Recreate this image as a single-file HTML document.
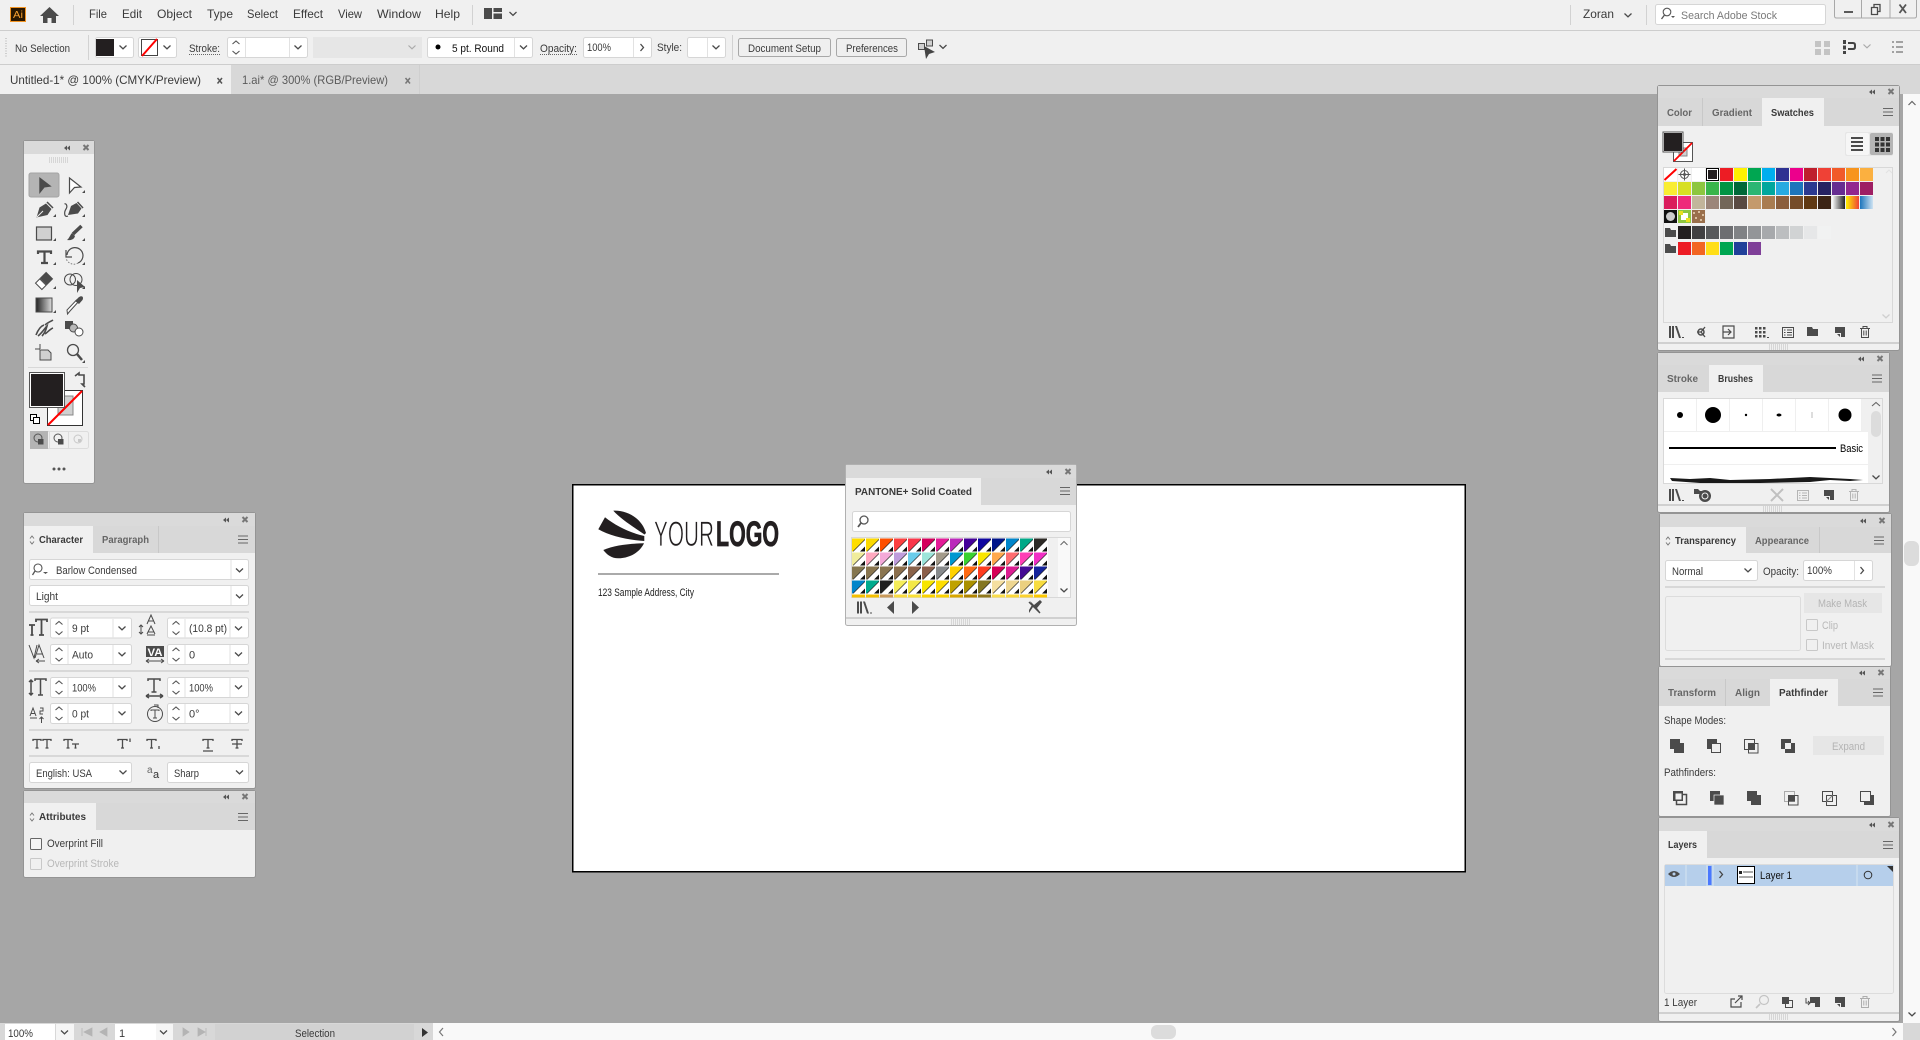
<!DOCTYPE html>
<html><head><meta charset="utf-8"><title>Illustrator</title>
<style>
html,body{margin:0;padding:0;width:1920px;height:1040px;overflow:hidden;background:#a6a6a6}
svg{display:block;position:absolute;left:0;top:0}
text{font-family:"Liberation Sans",sans-serif;font-size:11px;fill:#3a3a3a}
.f{fill:#fff;stroke:#d6d6d6;stroke-width:1}
.t{fill:#d8d8d8}
.b{fill:#f0f0f0}
.g{fill:#b4b4b4}
.s rect{width:13px;height:13px}
.ln{stroke:#d8d8d8;stroke-width:2}
.ic{fill:#4b4b4b}
.o{fill:none;stroke:#4b4b4b;stroke-width:1.2}
.m{font-size:12px}
</style></head><body>
<svg width="1920" height="1040" viewBox="0 0 1920 1040" xmlns="http://www.w3.org/2000/svg">
<defs>
<path id="ch" d="M-3.5-1.5 0 1.8 3.5-1.5" fill="none" stroke="#4a4a4a" stroke-width="1.3"/>
<path id="chg" d="M-3.5-1.5 0 1.8 3.5-1.5" fill="none" stroke="#aaa" stroke-width="1.2"/>
<g id="sp"><path d="M-3.5 -3.5 0-6.5 3.5-3.5M-3.5 3.5 0 6.5 3.5 3.5" fill="none" stroke="#555" stroke-width="1.1"/></g>
<g id="ud"><path d="M-2-1.5 0-4 2-1.5M-2 1.5 0 4 2 1.5" fill="none" stroke="#777" stroke-width="1"/></g>
<g id="hb"><path d="M-1 0 2-2.5V2.5ZM-4 0-1-2.5V2.5Z" fill="#555"/><path d="M15.5-3 20.5 2M20.5-3 15.5 2" stroke="#777" stroke-width="2" fill="none"/></g>
<g id="mn"><path d="M0-3.5H10M0 0H10M0 3.5H10" stroke="#666" stroke-width="1" fill="none"/></g>
<g id="lib" fill="#4b4b4b"><rect x="0" y="-6" width="2" height="12"/><rect x="3" y="-6" width="2" height="12"/><path d="M6-6 8-6 12 6 10 6Z"/><rect x="13" y="5" width="2" height="1"/></g>
<g id="nw"><path d="M0-5H10V5H6V1H0Z" fill="#4b4b4b"/><path d="M2 2H5V5Z" fill="#4b4b4b"/></g>
<g id="tr" fill="none" stroke="#4b4b4b" stroke-width="1"><path d="M0-3.5H10M3-3.5V-5.5H7V-3.5M1.5-3.5V5.5H8.500V-3.500M3.800-1.500V3.500M6.200-1.500V3.500"/></g>
<g id="fd"><path d="M0-5H5L6-3H11V4H0Z" fill="#4b4b4b"/></g>
<g id="lst" fill="none" stroke="#4b4b4b"><rect x="0.500" y="-4.500" width="11" height="10"/><path d="M2-2H3.500M5-2H10M2 0.500H3.500M5 0.500H10M2 3H3.500M5 3H10"/></g>
<pattern id="pn" x="852" y="538.5" width="14" height="14" patternUnits="userSpaceOnUse"><path d="M13 1V13H1Z" fill="#fff"/><path d="M13 1 1 13" stroke="#222" stroke-width=".6"/><path d="M13 8V13H8Z" fill="#111"/><path d="M13 0h1v14H13zM0 13h14v1H0z" fill="#fff"/></pattern>
<linearGradient id="gr"><stop offset="0" stop-color="#222"/><stop offset="1" stop-color="#ddd"/></linearGradient>
<linearGradient id="sg1"><stop offset="0" stop-color="#fff"/><stop offset="1" stop-color="#222"/></linearGradient>
<linearGradient id="sg2"><stop offset="0" stop-color="#fff200"/><stop offset="1" stop-color="#ef4136"/></linearGradient>
<linearGradient id="sg3"><stop offset="0" stop-color="#1c75bc"/><stop offset="1" stop-color="#cfe3f2"/></linearGradient>
</defs>

<!-- frame -->
<rect width="1920" height="1040" fill="#a6a6a6"/>
<rect width="1920" height="30" fill="#f0f0f0"/>
<rect y="30" width="1920" height="1" fill="#cdcdcd"/>
<rect y="31" width="1920" height="33" fill="#f0f0f0"/>
<rect y="64" width="1920" height="1" fill="#cdcdcd"/>
<rect y="65" width="1920" height="29" fill="#d8d8d8"/>
<rect y="65" width="231" height="29" fill="#f0f0f0"/>
<rect x="419" y="65" width="1" height="29" fill="#cfcfcf"/>

<!-- menu bar -->
<rect x="10.500" y="7.500" width="15" height="14" fill="#2b1700" stroke="#f29423"/>
<text x="13" y="18" textLength="10" lengthAdjust="spacingAndGlyphs" style="fill:#f7a030;font-size:10px">Ai</text>
<path d="M49.500 7 40 16H43V23H47.500V18H51.500V23H56V16H59Z" fill="#4b4b4b"/>
<rect x="73" y="5" width="1" height="20" fill="#d2d2d2"/>
<text class="m" x="89" y="18" textLength="18" lengthAdjust="spacingAndGlyphs">File</text>
<text class="m" x="122" y="18" textLength="20" lengthAdjust="spacingAndGlyphs">Edit</text>
<text class="m" x="157" y="18" textLength="35" lengthAdjust="spacingAndGlyphs">Object</text>
<text class="m" x="207" y="18" textLength="26" lengthAdjust="spacingAndGlyphs">Type</text>
<text class="m" x="247" y="18" textLength="31" lengthAdjust="spacingAndGlyphs">Select</text>
<text class="m" x="293" y="18" textLength="30" lengthAdjust="spacingAndGlyphs">Effect</text>
<text class="m" x="338" y="18" textLength="24" lengthAdjust="spacingAndGlyphs">View</text>
<text class="m" x="377" y="18" textLength="44" lengthAdjust="spacingAndGlyphs">Window</text>
<text class="m" x="435" y="18" textLength="25" lengthAdjust="spacingAndGlyphs">Help</text>
<rect x="472" y="5" width="1" height="20" fill="#d2d2d2"/>
<path d="M484 8h8v11h-8zM493.500 8H502V12H493.500zM493.500 13.500H502V19H493.500z" fill="#4b4b4b"/>
<use href="#ch" x="513" y="13.500"/>
<rect x="1570" y="5" width="1" height="20" fill="#d2d2d2"/>
<text class="m" x="1583" y="18" textLength="31" lengthAdjust="spacingAndGlyphs">Zoran</text>
<use href="#ch" x="1628" y="15"/>
<rect x="1646" y="5" width="1" height="20" fill="#d2d2d2"/>
<rect x="1655.500" y="4.500" width="170" height="20" rx="2" class="f"/>
<circle cx="1667" cy="12" r="3.800" fill="none" stroke="#555" stroke-width="1.100"/><path d="M1664.500 15 1661.500 19" stroke="#555" stroke-width="1.300"/><path d="M1671 16h4l-2 2z" fill="#555"/>
<text x="1681" y="19" textLength="96" lengthAdjust="spacingAndGlyphs" style="fill:#7a7a7a">Search Adobe Stock</text>
<path d="M1834.500 0V16Q1834.500 18 1836.500 18H1914.500Q1916.500 18 1916.500 16V0M1861.500 0V18M1890 0V18" fill="none" stroke="#a8a8a8"/>
<rect x="1844" y="11" width="9" height="2" fill="#5a5a5a"/>
<path d="M1871.500 7.500h6v7h-6zM1874 7.500v-3h6v7h-2.500" fill="none" stroke="#4b4b4b" stroke-width="1.300"/>
<path d="M1899.500 4.500 1906 13M1906 4.500 1899.500 13" stroke="#555" stroke-width="1.800"/>

<!-- control bar -->
<path d="M6 38V58" stroke="#aaa" stroke-dasharray="1 1.500" stroke-width="1"/>
<text x="15" y="52" textLength="55" lengthAdjust="spacingAndGlyphs">No Selection</text>
<rect x="88" y="35" width="1" height="25" fill="#d2d2d2"/>
<rect x="95.500" y="37.500" width="38" height="20" rx="2" class="f"/><rect x="96" y="39" width="18" height="17" fill="#231f20"/><use href="#ch" x="123" y="47"/>
<rect x="138.500" y="37.500" width="38" height="20" rx="2" class="f"/><rect x="141.500" y="39.500" width="16" height="16" fill="#fff" stroke="#444"/><path d="M142 56 157 39" stroke="#f00" stroke-width="2"/><use href="#ch" x="167" y="47"/>
<text x="189" y="52" textLength="31" lengthAdjust="spacingAndGlyphs">Stroke:</text><path d="M189 54.500H220" stroke="#666" stroke-dasharray="1 1"/>
<rect x="227.500" y="37.500" width="80" height="20" rx="2" class="f"/><path d="M245.500 38V57M289.500 38V57" stroke="#e2e2e2"/><use href="#sp" x="236" y="47.500"/><use href="#ch" x="298" y="47"/>
<rect x="313" y="37" width="109" height="21" fill="#e6e6e6"/><use href="#chg" x="412" y="47"/>
<rect x="427.500" y="37.500" width="105" height="20" rx="2" class="f"/><path d="M514.500 38V57" stroke="#e2e2e2"/><circle cx="438" cy="47" r="2.500" fill="#000"/><text x="452" y="52" textLength="52" lengthAdjust="spacingAndGlyphs" style="fill:#111">5 pt. Round</text><use href="#ch" x="523.500" y="47"/>
<text x="540" y="52" textLength="37" lengthAdjust="spacingAndGlyphs">Opacity:</text><path d="M540 54.500H577" stroke="#666" stroke-dasharray="1 1"/>
<rect x="583.500" y="37.500" width="68" height="20" rx="2" class="f"/><path d="M633.500 38V57" stroke="#e2e2e2"/><text x="587" y="51" textLength="24" lengthAdjust="spacingAndGlyphs">100%</text><path d="M640.500 44 643.500 47.500 640.500 51" fill="none" stroke="#4a4a4a" stroke-width="1.300"/>
<text x="657" y="51" textLength="25" lengthAdjust="spacingAndGlyphs">Style:</text>
<rect x="687.500" y="37.500" width="38" height="20" rx="2" class="f"/><path d="M707.500 38V57" stroke="#e2e2e2"/><use href="#ch" x="716" y="47"/>
<rect x="732" y="35" width="1" height="25" fill="#d2d2d2"/>
<rect x="738.500" y="38.500" width="92" height="18" rx="2" fill="#efefef" stroke="#a8a8a8"/><text x="748" y="52" textLength="73" lengthAdjust="spacingAndGlyphs">Document Setup</text>
<rect x="836.500" y="38.500" width="70" height="18" rx="2" fill="#efefef" stroke="#a8a8a8"/><text x="846" y="52" textLength="52" lengthAdjust="spacingAndGlyphs">Preferences</text>
<g fill="#cfcfcf" stroke="#4b4b4b"><rect x="918.500" y="43.500" width="6" height="6"/><rect x="926.500" y="40" width="6" height="6"/></g><path d="M924 46 935 52 929 54 926 59Z" fill="#444"/><use href="#ch" x="943" y="46.500"/>
<path d="M1815 41h6v6h-6zM1824 41h6v6h-6zM1815 49h6v6h-6zM1824 49h6v6h-6z" fill="#c4c4c4"/>
<path d="M1843 40h3v4h-3zM1843 45.500h3v4h-3zM1843 51h3v3h-3zM1848 42h5q3 0 3 3v2q0 3-3 3h-5v-2h5q1 0 1-1v-2q0-1-1-1h-5z" fill="#444"/>
<use href="#chg" x="1867" y="46"/>
<path d="M1892 42h2M1896 42h7M1892 47h2M1896 47h7M1892 52h2M1896 52h7" stroke="#555" fill="none"/>

<!-- tabs -->
<text class="m" x="10" y="84" textLength="191" lengthAdjust="spacingAndGlyphs">Untitled-1* @ 100% (CMYK/Preview)</text>
<path d="M217.500 78 222 83.500M222 78 217.500 83.500" stroke="#555" stroke-width="1.500"/>
<text class="m" x="242" y="84" textLength="146" lengthAdjust="spacingAndGlyphs" style="fill:#5a5a5a">1.ai* @ 300% (RGB/Preview)</text>
<path d="M405.500 78 410 83.500M410 78 405.500 83.500" stroke="#777" stroke-width="1.500"/>

<!-- artboard -->
<rect x="572.750" y="484.750" width="892.500" height="387" fill="#fff" stroke="#000" stroke-width="1.500"/>
<path d="M613.300 510.700C628 510 642 519 646 533L644.500 534.500C632 526 621 519 613.300 510.700Z" fill="#231f20"/>
<path d="M605 517.300 598.300 529.300C610 536 628 540 644.300 541V536C630 533 616 526 605 517.300Z" fill="#231f20"/>
<path d="M603.300 550C615 545 630 543.500 644 543.300C640 552 630 558.300 618 558.300 612 558.300 607 555 603.300 550Z" fill="#231f20"/>
<text x="654" y="546" textLength="60" lengthAdjust="spacingAndGlyphs" style="font-size:35px;fill:#231f20;stroke:#fff;stroke-width:.7">YOUR</text>
<text x="716" y="546" textLength="63" lengthAdjust="spacingAndGlyphs" style="font-size:35px;font-weight:bold;fill:#231f20;stroke:#231f20;stroke-width:.8">LOGO</text>
<rect x="598" y="573.500" width="181" height="1" fill="#555"/>
<text x="598" y="596" textLength="96" lengthAdjust="spacingAndGlyphs" style="font-size:11px;fill:#222">123 Sample Address, City</text>

<!-- right scrollbar -->
<rect x="1903" y="94" width="17" height="929" fill="#f9f9f9"/>
<rect x="1904" y="541" width="15" height="25" rx="6" fill="#dcdcdc"/>
<path d="M1908.500 105 1912 101.500 1915.500 105" fill="none" stroke="#666" stroke-width="1.200"/>
<use href="#ch" x="1912" y="1014"/>

<!-- status bar -->
<rect y="1023" width="1920" height="17" fill="#d8d8d8"/>
<rect x="5" y="1024" width="50" height="16" fill="#fff"/>
<text x="8" y="1037" textLength="25" lengthAdjust="spacingAndGlyphs" style="font-size:11px">100%</text>
<rect x="56" y="1024" width="18" height="16" fill="#f5f5f5"/><use href="#ch" x="64.500" y="1032"/>
<path d="M82 1028v8M92 1028l-8 4 8 4zM107 1028l-7 4 7 4z" fill="#b4b4b4" stroke="#b4b4b4" stroke-width=".8"/>
<rect x="115" y="1024" width="41" height="16" fill="#fff"/><text x="119" y="1037" style="font-size:11px">1</text>
<rect x="156" y="1024" width="17" height="16" fill="#f5f5f5"/><use href="#ch" x="163.500" y="1032"/>
<path d="M183 1028l6 4-6 4zM198 1028l7 4-7 4zM206 1028v8" fill="#b4b4b4" stroke="#b4b4b4" stroke-width=".8"/>
<rect x="215" y="1024" width="199" height="16" fill="#d2d2d2"/>
<text x="295" y="1037" textLength="40" lengthAdjust="spacingAndGlyphs">Selection</text>
<path d="M422 1028v9l6-4.500z" fill="#333"/>
<rect x="433" y="1023" width="1470" height="17" fill="#f9f9f9"/>
<path d="M443 1028 439.500 1032 443 1036" fill="none" stroke="#777" stroke-width="1.200"/>
<rect x="1151" y="1025" width="25" height="14" rx="6" fill="#dcdcdc"/>
<path d="M1892.500 1028 1896 1032 1892.500 1036" fill="none" stroke="#777" stroke-width="1.200"/>

<!-- TOOLS -->
<rect x="23.500" y="140.500" width="71" height="343" rx="2" fill="#f0f0f0" stroke="#949494"/>
<rect x="24" y="141" width="70" height="13" fill="#dadada"/>
<use href="#hb" x="68" y="148"/>
<path d="M49 158h19M49 160h19M49 162h19" stroke="#bbb" stroke-dasharray="1 1" fill="none"/>
<rect x="29" y="173" width="30" height="24" rx="2" fill="#b4b4b4" stroke="#a4a4a4"/>
<path class="ic" d="M39.300 177 51.700 186.500 44.500 187.500 39.300 194Z"/>
<path d="M69.500 178 81 187 74.500 187.500 69.500 193Z" fill="#fff" stroke="#4b4b4b" stroke-width="1.200"/>
<path class="ic" d="M36.500 217.500 39.500 207.500 46 203.500 51.500 209 47.500 215Z"/><path d="M47 202 53 208" stroke="#4b4b4b" stroke-width="1.500"/><path d="M37 217 43 211" stroke="#f0f0f0"/>
<path class="ic" d="M68 215 71 206 76.500 203 81.500 208.500 78 213.500Z"/><path d="M77.500 202 83 208" stroke="#4b4b4b" stroke-width="1.500"/><path d="M68 216C64 218 64 212 66 209 68 206 66 203 64.500 204" fill="none" stroke="#4b4b4b" stroke-width="1.200"/>
<rect x="36.500" y="227" width="15" height="13" fill="#d0d0d0" stroke="#4b4b4b" stroke-width="1.200"/>
<path d="M81.500 226 73 234" stroke="#4b4b4b" stroke-width="3.500"/><path class="ic" d="M72 233 75 236C74 240 70 240.500 67 240 69.500 238 70 235 72 233Z"/>
<path d="M38 254V251.500H51V254M44.500 251.500V263M41 263H48" fill="none" stroke="#4b4b4b" stroke-width="2.200"/>
<path d="M67 255A8 8 0 1 1 78 263" fill="none" stroke="#4b4b4b" stroke-width="1.200"/><path d="M66 250V257H72" fill="none" stroke="#4b4b4b" stroke-width="1.200"/><path d="M78 263A8 8 0 0 1 66 258" fill="none" stroke="#777" stroke-dasharray="1.500 1.500"/>
<g transform="rotate(45 44 281)"><rect x="39" y="273" width="10" height="9" class="ic"/><rect x="39.500" y="282.500" width="9" height="6" fill="#fff" stroke="#4b4b4b"/></g>
<circle cx="70" cy="279.500" r="5.500" fill="none" stroke="#4b4b4b"/><circle cx="76" cy="279.500" r="6" fill="none" stroke="#4b4b4b"/><path class="ic" d="M77 280 85 287 80 288 77 293Z"/>
<rect x="36" y="298" width="16" height="14" fill="url(#gr)" stroke="#4b4b4b"/>
<path d="M80 300 70 311 67.500 314 67 310 76.500 300Z" fill="#fff" stroke="#4b4b4b"/><path class="ic" d="M75 301 79 297C82 295 84 297 82.500 300L79 304Z"/>
<path d="M36 335C38 330 41 326 44 325M38 336C42 333 45 328 47 326 46 330 44 334 42 336M45 334C48 332 50 329 53 328M45 325C48 322 50 322 53 320" fill="none" stroke="#4b4b4b" stroke-width="1.600"/>
<path class="ic" d="M65 321h8v8h-8z"/><circle cx="73.500" cy="328" r="4" fill="#b8b8b8" stroke="#4b4b4b"/><circle cx="79" cy="332" r="4" fill="#fff" stroke="#4b4b4b"/>
<path d="M40 350H48L51 353V360H40Z" fill="#d0d0d0" stroke="#4b4b4b"/><path d="M35 349H40M40 344V349" stroke="#4b4b4b" fill="none"/>
<circle cx="73" cy="350" r="5.500" fill="none" stroke="#4b4b4b" stroke-width="1.300"/><path d="M77 354 82 360" stroke="#4b4b4b" stroke-width="2.500"/>
<path class="ic" d="M85 190v3h-3ZM56 214v3h-3ZM85 214v3h-3ZM56 238v3h-3ZM85 238v3h-3ZM56 262v3h-3ZM85 262v3h-3ZM56 286v3h-3ZM85 286v3h-3ZM56 310v3h-3ZM85 360v3h-3Z"/>
<rect x="28" y="367" width="60" height="1" fill="#d8d8d8"/>
<rect x="47.500" y="390.500" width="35" height="35" fill="#fff" stroke="#333"/><rect x="58" y="396" width="15" height="19" fill="#d0d0d0" stroke="#888"/><path d="M48 425 82 391" stroke="#f00" stroke-width="2"/>
<rect x="29.500" y="372.500" width="35" height="35" fill="#231f20" stroke="#555"/><rect x="30.500" y="373.500" width="33" height="33" fill="none" stroke="#fff"/>
<path d="M75 376 79 373V375H84V384H82L85 387" fill="none" stroke="#4b4b4b" stroke-width="1.600"/>
<rect x="30.500" y="414.500" width="6" height="6" fill="#fff" stroke="#000"/><rect x="33.500" y="417.500" width="6" height="6" fill="#fff" stroke="#000"/>
<rect x="30.500" y="431.500" width="58" height="17" rx="2" fill="#f0f0f0" stroke="#dcdcdc"/>
<rect x="30" y="431" width="18" height="18" fill="#b4b4b4"/>
<rect x="49" y="432" width="1" height="16" fill="#dcdcdc"/><rect x="68" y="432" width="1" height="16" fill="#dcdcdc"/>
<circle cx="38" cy="438" r="4" fill="none" stroke="#555"/><rect x="38" y="439" width="5.500" height="5.500" fill="#4b4b4b"/>
<circle cx="58" cy="438" r="4" fill="none" stroke="#555"/><rect x="58" y="439" width="5.500" height="5.500" fill="#4b4b4b"/>
<circle cx="78" cy="439" r="4" fill="none" stroke="#c8c8c8"/><rect x="78" y="439" width="3" height="3" fill="#c8c8c8"/>
<g fill="#555"><circle cx="54" cy="469" r="1.500"/><circle cx="59" cy="469" r="1.500"/><circle cx="64" cy="469" r="1.500"/></g>

<!-- CHARACTER -->
<rect x="23.500" y="512.500" width="232" height="276" rx="2" fill="#f0f0f0" stroke="#949494"/>
<rect x="24" y="513" width="231" height="13" fill="#dadada"/>
<use href="#hb" x="227" y="520"/>
<rect x="24" y="526" width="231" height="27" class="t"/><rect x="24" y="526" width="69" height="27" class="b"/>
<rect x="158" y="526" width="1" height="27" fill="#c8c8c8"/>
<use href="#ud" x="32" y="540"/>
<text x="39" y="543" textLength="44" lengthAdjust="spacingAndGlyphs" style="font-weight:bold;font-size:10.500px">Character</text>
<text x="102" y="543" textLength="47" lengthAdjust="spacingAndGlyphs" style="font-weight:bold;font-size:10.500px;fill:#666">Paragraph</text>
<use href="#mn" x="238" y="539.500"/>
<rect x="29.500" y="559.500" width="219" height="20" rx="2" class="f"/><path d="M231 560V579" stroke="#e2e2e2"/>
<circle cx="38" cy="568" r="4" fill="none" stroke="#555" stroke-width="1.100"/><path d="M35 571 32.500 575" stroke="#555" stroke-width="1.300"/><path d="M43 572h5l-2.500 2z" fill="#555"/>
<text x="56" y="574" textLength="81" lengthAdjust="spacingAndGlyphs">Barlow Condensed</text><use href="#ch" x="239.500" y="570"/>
<rect x="29.500" y="585.500" width="219" height="20" rx="2" class="f"/><path d="M231 586V605" stroke="#e2e2e2"/>
<text x="36" y="600" textLength="22" lengthAdjust="spacingAndGlyphs">Light</text><use href="#ch" x="239.500" y="596"/>
<path class="ln" d="M29 612H249M29 671H249M29 730H249M29 756H249"/>
<!-- fields -->
<g id="ff1"><rect x="50.500" y="618" width="81" height="20" rx="2" class="f"/><path d="M68 619V638M113 619V638" stroke="#e2e2e2"/><use href="#sp" x="59" y="628"/><use href="#ch" x="122" y="628"/></g>
<g><rect x="167.500" y="618" width="81" height="20" rx="2" class="f"/><path d="M185 619V638M230 619V638" stroke="#e2e2e2"/><use href="#sp" x="176" y="628"/><use href="#ch" x="238.500" y="628"/></g>
<g><rect x="50.500" y="644.500" width="81" height="20" rx="2" class="f"/><path d="M68 645V664M113 645V664" stroke="#e2e2e2"/><use href="#sp" x="59" y="654.500"/><use href="#ch" x="122" y="654"/></g>
<g><rect x="167.500" y="644.500" width="81" height="20" rx="2" class="f"/><path d="M185 645V664M230 645V664" stroke="#e2e2e2"/><use href="#sp" x="176" y="654.500"/><use href="#ch" x="238.500" y="654"/></g>
<g><rect x="50.500" y="677.500" width="81" height="20" rx="2" class="f"/><path d="M68 678V697M113 678V697" stroke="#e2e2e2"/><use href="#sp" x="59" y="687.500"/><use href="#ch" x="122" y="687"/></g>
<g><rect x="167.500" y="677.500" width="81" height="20" rx="2" class="f"/><path d="M185 678V697M230 678V697" stroke="#e2e2e2"/><use href="#sp" x="176" y="687.500"/><use href="#ch" x="238.500" y="687"/></g>
<g><rect x="50.500" y="703.500" width="81" height="20" rx="2" class="f"/><path d="M68 704V723M113 704V723" stroke="#e2e2e2"/><use href="#sp" x="59" y="713.500"/><use href="#ch" x="122" y="713"/></g>
<g><rect x="167.500" y="703.500" width="81" height="20" rx="2" class="f"/><path d="M185 704V723M230 704V723" stroke="#e2e2e2"/><use href="#sp" x="176" y="713.500"/><use href="#ch" x="238.500" y="713"/></g>
<text x="72" y="632" textLength="17" lengthAdjust="spacingAndGlyphs">9 pt</text>
<text x="189" y="632" textLength="38" lengthAdjust="spacingAndGlyphs">(10.8 pt)</text>
<text x="72" y="658.500" textLength="21" lengthAdjust="spacingAndGlyphs">Auto</text>
<text x="189" y="658.500">0</text>
<text x="72" y="691.500" textLength="24" lengthAdjust="spacingAndGlyphs">100%</text>
<text x="189" y="691.500" textLength="24" lengthAdjust="spacingAndGlyphs">100%</text>
<text x="72" y="717.500" textLength="17" lengthAdjust="spacingAndGlyphs">0 pt</text>
<text x="189" y="717.500">0°</text>
<!-- char icons -->
<path d="M29 624H35M32 624V634M30.500 634H33.500M36 621V618.500H47V621M41.500 618.500V634M39 634H44" fill="none" stroke="#4b4b4b" stroke-width="1.800" transform="translate(0 1)"/>
<path d="M147 624 151 615 155 624M148.500 621H153.500M147 634 151 626 155 634M148.500 632H153.500M147 635H155M141 625V634M139 627 141 625 143 627M139 632 141 634 143 632" fill="none" stroke="#4b4b4b"/>
<path d="M29 645 34 658 37 645M35 658 39 645 44 658M37 654H43" fill="none" stroke="#4b4b4b"/><path d="M36 661H45M36 661 39 659M36 661 39 663" fill="none" stroke="#4b4b4b"/>
<rect x="146" y="646" width="18" height="11" fill="#4b4b4b"/><text x="147.500" y="656" textLength="15" lengthAdjust="spacingAndGlyphs" style="font-size:11px;fill:#fff;font-weight:bold">VA</text><path d="M146 661H164M146 661 149 659M146 661 149 663M164 661 161 659M164 661 161 663" fill="none" stroke="#4b4b4b"/>
<path d="M31 680V695M29 682 31 680 33 682M29 693 31 695 33 693M35 681V679H46V681M40.500 679V695M38 695H43" fill="none" stroke="#4b4b4b" stroke-width="1.500"/>
<path d="M148 681V679H160V681M154 679V692M151.500 692H156.500M146 696H163M146 696 149 694M146 696 149 698M163 696 160 694M163 696 160 698" fill="none" stroke="#4b4b4b" stroke-width="1.500"/>
<path d="M30 716 33 708 36 716M31 713.500H35M30 718H37M40 708H43V711H40V714H43M41.500 723V717M39.500 719 41.500 717 43.500 719" fill="none" stroke="#4b4b4b"/>
<circle cx="155" cy="714" r="7.500" fill="none" stroke="#4b4b4b"/><path d="M151 711V710H159V711M155 710V718M153 718H157" fill="none" stroke="#4b4b4b"/><path d="M154 705H158V708" fill="none" stroke="#4b4b4b"/>
<g fill="none" stroke="#4b4b4b" stroke-width="1.300"><path d="M33 741V739.500H41V741M37 739.500V748M35.500 748H38.500M43 741V739.500H51V741M47 739.500V748M45.500 748H48.500"/><path d="M64 741V739.500H72V741M68 739.500V748M66.500 748H69.500M72 744H79M75.500 744V748M74.500 748H76.500"/><path d="M118 741V739.500H127V741M122.500 739.500V748M121 748H124M130 738.500V742"/><path d="M147 741V739.500H156V741M151.500 739.500V748M150 748H153M159 746V749"/><path d="M203 741V739.500H213V741M208 739.500V748M206.500 748H209.500M203 751H213"/><path d="M232 741V739.500H242V741M237 739.500V748M235.500 748H238.500M232 744H242"/></g>
<rect x="29.500" y="762.500" width="102" height="20" rx="2" class="f"/><text x="36" y="777" textLength="56" lengthAdjust="spacingAndGlyphs">English: USA</text><use href="#ch" x="123" y="772"/>
<text x="147" y="773" style="font-size:10px;fill:#666">a</text><text x="153" y="778" style="font-size:11px;fill:#333">a</text>
<rect x="167.500" y="762.500" width="81" height="20" rx="2" class="f"/><text x="174" y="777" textLength="25" lengthAdjust="spacingAndGlyphs">Sharp</text><use href="#ch" x="239.500" y="772"/>

<!-- ATTRIBUTES -->
<rect x="23.500" y="790.500" width="232" height="87" rx="2" fill="#f0f0f0" stroke="#949494"/>
<rect x="24" y="791" width="231" height="12" fill="#dadada"/>
<use href="#hb" x="227" y="797"/>
<rect x="24" y="803" width="231" height="27" class="t"/><rect x="24" y="803" width="72" height="27" class="b"/>
<use href="#ud" x="32" y="817"/>
<text x="39" y="820" textLength="47" lengthAdjust="spacingAndGlyphs" style="font-weight:bold;font-size:10.500px">Attributes</text>
<use href="#mn" x="238" y="817"/>
<rect x="30.500" y="838.500" width="11" height="11" rx="1" fill="#f5f5f5" stroke="#666"/>
<text x="47" y="847" textLength="56" lengthAdjust="spacingAndGlyphs">Overprint Fill</text>
<rect x="30.500" y="858.500" width="11" height="11" rx="1" fill="none" stroke="#c8c8c8"/>
<text x="47" y="867" textLength="72" lengthAdjust="spacingAndGlyphs" style="fill:#b8b8b8">Overprint Stroke</text>

<!-- PANTONE -->
<rect x="845.500" y="464.500" width="231" height="161" rx="2" fill="#f0f0f0" stroke="#b0b0b0"/>
<rect x="846" y="465" width="230" height="13" fill="#dadada"/>
<use href="#hb" x="1050" y="472"/>
<rect x="846" y="478" width="230" height="27" class="t"/><rect x="846" y="478" width="135" height="27" class="b"/>
<text x="855" y="495" textLength="117" lengthAdjust="spacingAndGlyphs" style="font-weight:bold;font-size:10.500px">PANTONE+ Solid Coated</text>
<use href="#mn" x="1060" y="491"/>
<rect x="852.500" y="511.500" width="218" height="20" rx="2" class="f"/>
<circle cx="864" cy="520" r="4" fill="none" stroke="#555" stroke-width="1.300"/><path d="M861 523 858 527" stroke="#555" stroke-width="1.800"/>
<rect x="851.500" y="537.500" width="219" height="60" fill="#f0f0f0" stroke="#d8d8d8"/>
<rect x="1058" y="538" width="12" height="59" fill="#f9f9f9"/>
<path d="M1060.500 545 1064 541.500 1067.500 545" fill="none" stroke="#666"/>
<use href="#ch" x="1064" y="590"/>
<g class="s">
<rect x="852" y="538.500" fill="#fedd00"/><rect x="866" y="538.500" fill="#fcd900"/><rect x="880" y="538.500" fill="#fe5000"/><rect x="894" y="538.500" fill="#fc4040"/><rect x="908" y="538.500" fill="#f9364a"/><rect x="922" y="538.500" fill="#d4005c"/><rect x="936" y="538.500" fill="#e31c98"/><rect x="950" y="538.500" fill="#bb29bb"/><rect x="964" y="538.500" fill="#440099"/><rect x="978" y="538.500" fill="#10069f"/><rect x="992" y="538.500" fill="#001489"/><rect x="1006" y="538.500" fill="#0085ca"/><rect x="1020" y="538.500" fill="#00a887"/><rect x="1034" y="538.500" fill="#2d2a26"/>
<rect x="852" y="552.500" fill="#f0ec9c"/><rect x="866" y="552.500" fill="#ffa9c0"/><rect x="880" y="552.500" fill="#f4a9d8"/><rect x="894" y="552.500" fill="#bf9ddc"/><rect x="908" y="552.500" fill="#69cdeb"/><rect x="922" y="552.500" fill="#9ce5da"/><rect x="936" y="552.500" fill="#a39b8b"/><rect x="950" y="552.500" fill="#0098d0"/><rect x="964" y="552.500" fill="#3ad12f"/><rect x="978" y="552.500" fill="#fae600"/><rect x="992" y="552.500" fill="#ffa94d"/><rect x="1006" y="552.500" fill="#ff6d70"/><rect x="1020" y="552.500" fill="#fe3fb5"/><rect x="1034" y="552.500" fill="#f12fc5"/>
<rect x="852" y="566.500" fill="#84754e"/><rect x="866" y="566.500" fill="#8a7650"/><rect x="880" y="566.500" fill="#8a7550"/><rect x="894" y="566.500" fill="#8b6f4e"/><rect x="908" y="566.500" fill="#8a634b"/><rect x="922" y="566.500" fill="#8b5f4a"/><rect x="936" y="566.500" fill="#888b8d"/><rect x="950" y="566.500" fill="#ffd100"/><rect x="964" y="566.500" fill="#ff6a13"/><rect x="978" y="566.500" fill="#fe3d21"/><rect x="992" y="566.500" fill="#d50057"/><rect x="1006" y="566.500" fill="#dc1e92"/><rect x="1020" y="566.500" fill="#440a93"/><rect x="1034" y="566.500" fill="#14239b"/>
<rect x="852" y="580.500" fill="#0085ca"/><rect x="866" y="580.500" fill="#00ab8e"/><rect x="880" y="580.500" fill="#212121"/><rect x="894" y="580.500" fill="#f5ed5a"/><rect x="908" y="580.500" fill="#f3e847"/><rect x="922" y="580.500" fill="#f7e500"/><rect x="936" y="580.500" fill="#fedd00"/><rect x="950" y="580.500" fill="#bfa200"/><rect x="964" y="580.500" fill="#aa9000"/><rect x="978" y="580.500" fill="#847722"/><rect x="992" y="580.500" fill="#f5dfa0"/><rect x="1006" y="580.500" fill="#eed691"/><rect x="1020" y="580.500" fill="#ebd080"/><rect x="1034" y="580.500" fill="#f7dc3f"/>
</g>
<rect x="852" y="538.500" width="196" height="56" fill="url(#pn)"/>
<g>
<rect x="852" y="594.500" width="13" height="3" fill="#f5bf00"/><rect x="866" y="594.500" width="13" height="3" fill="#f5bf00"/><rect x="880" y="594.500" width="13" height="3" fill="#c99a5b"/><rect x="894" y="594.500" width="13" height="3" fill="#fadc40"/><rect x="908" y="594.500" width="13" height="3" fill="#fae036"/><rect x="922" y="594.500" width="13" height="3" fill="#fad200"/><rect x="936" y="594.500" width="13" height="3" fill="#fad200"/><rect x="950" y="594.500" width="13" height="3" fill="#d8a600"/><rect x="964" y="594.500" width="13" height="3" fill="#b08400"/><rect x="978" y="594.500" width="13" height="3" fill="#90781c"/><rect x="992" y="594.500" width="13" height="3" fill="#fadd4c"/><rect x="1006" y="594.500" width="13" height="3" fill="#fad73a"/><rect x="1020" y="594.500" width="13" height="3" fill="#fcd22f"/><rect x="1034" y="594.500" width="13" height="3" fill="#fcc800"/>
</g>
<use href="#lib" x="857" y="607.500"/>
<path class="ic" d="M894 601V614L887 607.500ZM912 601V614L919 607.500Z"/>
<path d="M1030 601 1034 605 1040 600 1042 602 1037 608 1040 612 1033 607 1029 613 1029 610 1032 605Z" fill="#4b4b4b"/><path d="M1029 602 1040 613" stroke="#4b4b4b" stroke-width="1.500"/>
<rect x="846" y="617" width="230" height="2" fill="#d0d0d0"/>
<path d="M951 620h19M951 622h19M951 624h19" stroke="#bbb" stroke-dasharray="1 1" fill="none"/>

<!-- SWATCHES -->
<rect x="1657.500" y="85.500" width="242" height="265" rx="2" fill="#f0f0f0" stroke="#949494"/>
<rect x="1658" y="86" width="241" height="12" fill="#dadada"/>
<use href="#hb" x="1873" y="92"/>
<rect x="1658" y="98" width="241" height="28" class="t"/>
<rect x="1762" y="98" width="62" height="28" class="b"/>
<rect x="1702" y="98" width="1" height="28" fill="#c8c8c8"/>
<text x="1667" y="116" textLength="25" lengthAdjust="spacingAndGlyphs" style="font-weight:bold;font-size:10.500px;fill:#666">Color</text>
<text x="1712" y="116" textLength="40" lengthAdjust="spacingAndGlyphs" style="font-weight:bold;font-size:10.500px;fill:#666">Gradient</text>
<text x="1771" y="116" textLength="43" lengthAdjust="spacingAndGlyphs" style="font-weight:bold;font-size:10.500px">Swatches</text>
<use href="#mn" x="1883" y="112"/>
<rect x="1673.500" y="142.500" width="19" height="19" fill="#fff" stroke="#555"/><rect x="1679" y="148" width="8" height="8" fill="#d0d0d0" stroke="#888"/><path d="M1674 161 1692 143" stroke="#f00" stroke-width="1.800"/>
<rect x="1663.500" y="132.500" width="19" height="19" fill="#231f20" stroke="#fff"/><rect x="1663" y="132" width="20" height="20" fill="none" stroke="#555"/>
<rect x="1845" y="132" width="48" height="24" rx="2" fill="#e6e6e6"/>
<rect x="1846" y="133" width="23" height="22" rx="2" fill="#f6f6f6"/><rect x="1870" y="133" width="23" height="22" rx="2" fill="#b4b4b4"/>
<path d="M1851 138H1863M1851 142H1863M1851 146H1863M1851 150H1863" stroke="#4b4b4b" stroke-width="2"/>
<path d="M1875 137h4v4h-4zM1880.500 137h4v4h-4zM1886 137h4v4h-4zM1875 142.500h4v4h-4zM1880.500 142.500h4v4h-4zM1886 142.500h4v4h-4zM1875 148h4v4h-4zM1880.500 148h4v4h-4zM1886 148h4v4h-4z" fill="#333"/>
<rect x="1663.500" y="167.500" width="229" height="155" fill="#f0f0f0" stroke="#d8d8d8"/>
<g class="s">
<rect x="1664" y="168" fill="#fff"/><rect x="1678" y="168" fill="#f8f8f8"/><rect x="1692" y="168" fill="#fff"/><rect x="1706" y="168" fill="#000"/><rect x="1720" y="168" fill="#ed1c24"/><rect x="1734" y="168" fill="#fff200"/><rect x="1748" y="168" fill="#00a651"/><rect x="1762" y="168" fill="#00aeef"/><rect x="1776" y="168" fill="#2e3192"/><rect x="1790" y="168" fill="#ec008c"/><rect x="1804" y="168" fill="#be1e2d"/><rect x="1818" y="168" fill="#ef4136"/><rect x="1832" y="168" fill="#f15a29"/><rect x="1846" y="168" fill="#f7941d"/><rect x="1860" y="168" fill="#fbb040"/>
<rect x="1664" y="182" fill="#f9ed32"/><rect x="1678" y="182" fill="#d7df23"/><rect x="1692" y="182" fill="#8dc63f"/><rect x="1706" y="182" fill="#39b54a"/><rect x="1720" y="182" fill="#009444"/><rect x="1734" y="182" fill="#006838"/><rect x="1748" y="182" fill="#2bb673"/><rect x="1762" y="182" fill="#00a79d"/><rect x="1776" y="182" fill="#27aae1"/><rect x="1790" y="182" fill="#1c75bc"/><rect x="1804" y="182" fill="#2b3990"/><rect x="1818" y="182" fill="#262262"/><rect x="1832" y="182" fill="#662d91"/><rect x="1846" y="182" fill="#92278f"/><rect x="1860" y="182" fill="#9e1f63"/>
<rect x="1664" y="196" fill="#da1c5c"/><rect x="1678" y="196" fill="#ee2a7b"/><rect x="1692" y="196" fill="#c2b59b"/><rect x="1706" y="196" fill="#9b8579"/><rect x="1720" y="196" fill="#726658"/><rect x="1734" y="196" fill="#594a42"/><rect x="1748" y="196" fill="#c49a6c"/><rect x="1762" y="196" fill="#a97c50"/><rect x="1776" y="196" fill="#8b5e3c"/><rect x="1790" y="196" fill="#754c29"/><rect x="1804" y="196" fill="#603913"/><rect x="1818" y="196" fill="#3c2415"/><rect x="1832" y="196" fill="url(#sg1)"/><rect x="1846" y="196" fill="url(#sg2)"/><rect x="1860" y="196" fill="url(#sg3)"/>
<rect x="1664" y="210" fill="#111"/><rect x="1678" y="210" fill="#8dc63f"/><rect x="1692" y="210" fill="#9a6f4c"/>
<rect x="1678" y="226" fill="#231f20"/><rect x="1692" y="226" fill="#414042"/><rect x="1706" y="226" fill="#58595b"/><rect x="1720" y="226" fill="#6d6e71"/><rect x="1734" y="226" fill="#808285"/><rect x="1748" y="226" fill="#939598"/><rect x="1762" y="226" fill="#a7a9ac"/><rect x="1776" y="226" fill="#bcbec0"/><rect x="1790" y="226" fill="#d1d3d4"/><rect x="1804" y="226" fill="#e6e7e8"/><rect x="1818" y="226" fill="#f1f2f2"/>
<rect x="1678" y="242" fill="#ed1c24"/><rect x="1692" y="242" fill="#f26522"/><rect x="1706" y="242" fill="#ffde17"/><rect x="1720" y="242" fill="#00a651"/><rect x="1734" y="242" fill="#21409a"/><rect x="1748" y="242" fill="#7f3f98"/>
</g>
<path d="M1664.500 180 1676.500 169" stroke="#f00" stroke-width="2"/>
<circle cx="1684.500" cy="174.500" r="4" fill="none" stroke="#555"/><circle cx="1684.500" cy="174.500" r="1.500" fill="#555"/><path d="M1678.500 174.500H1690.500M1684.500 168.500V180.500" stroke="#555"/>
<rect x="1707.500" y="169.500" width="10" height="10" fill="#231f20" stroke="#fff"/>
<circle cx="1670.500" cy="216.500" r="4.500" fill="#ccc"/>
<path d="M1681 213h7v7h-7z" fill="#fff"/><path d="M1679 211h4v4h-4zM1686 218h4v4h-4z" fill="#e8e020"/>
<path d="M1693 212h2v2h-2zM1698 211h2v2h-2zM1702 214h2v2h-2zM1695 217h2v2h-2zM1700 219h2v2h-2z" fill="#d9bfa0"/>
<use href="#fd" x="1665" y="233"/><use href="#fd" x="1665" y="249"/>
<path d="M1886 173 1889 170 1892 173" fill="none" stroke="#e2e2e2"/><use href="#ch" x="1886" y="316" opacity=".2"/>
<use href="#lib" x="1669" y="332"/>
<circle cx="1701" cy="332" r="3" fill="none" stroke="#4b4b4b" stroke-width="1.500"/><path d="M1697 332H1701L1705 327M1701 332 1705 337" stroke="#4b4b4b" stroke-width="1.300" fill="none"/>
<path d="M1723 328V326H1734V338H1730M1723 332H1731M1728 329 1731 332 1728 335M1723 328 1723 338H1730" fill="none" stroke="#4b4b4b" stroke-width="1.200"/>
<path d="M1755 327h2.500v2.500H1755zM1759 327h2.500v2.500H1759zM1763 327h2.500v2.500H1763zM1755 331h2.500v2.500H1755zM1759 331h2.500v2.500H1759zM1763 331h2.500v2.500H1763zM1755 335h2.500v2.500H1755zM1759 335h2.500v2.500H1759zM1763 335h2.500v2.500H1763zM1767 337h2v1h-2z" fill="#4b4b4b"/>
<use href="#lst" x="1782" y="332"/><use href="#fd" x="1807" y="332"/>
<use href="#nw" x="1835" y="332"/><use href="#tr" x="1860" y="332"/>
<rect x="1658" y="342" width="241" height="2" fill="#d0d0d0"/>
<path d="M1769 345h19M1769 347h19M1769 349h19" stroke="#bbb" stroke-dasharray="1 1" fill="none"/>

<!-- BRUSHES -->
<rect x="1657.500" y="352.500" width="232" height="160" rx="2" fill="#f0f0f0" stroke="#949494"/>
<rect x="1658" y="353" width="231" height="12" fill="#dadada"/>
<use href="#hb" x="1862" y="359"/>
<rect x="1658" y="365" width="231" height="27" class="t"/><rect x="1709" y="365" width="54" height="27" class="b"/>
<text x="1667" y="382" textLength="31" lengthAdjust="spacingAndGlyphs" style="font-weight:bold;font-size:10.500px;fill:#666">Stroke</text>
<text x="1718" y="382" textLength="35" lengthAdjust="spacingAndGlyphs" style="font-weight:bold;font-size:10.500px">Brushes</text>
<use href="#mn" x="1872" y="378.500"/>
<rect x="1663.500" y="398.500" width="219" height="85" fill="#fff" stroke="#d8d8d8"/>
<rect x="1861" y="399" width="21" height="32" fill="#f0f0f0"/><rect x="1868" y="399" width="14" height="84" fill="#f0f0f0"/>
<path d="M1872 406 1876 402.500 1880 406" fill="none" stroke="#666" stroke-width="1.100"/>
<rect x="1871" y="411" width="10" height="26" rx="5" fill="#dcdcdc"/>
<use href="#ch" x="1876" y="477"/>
<path d="M1696.500 399V431M1729.500 399V431M1762.500 399V431M1795.500 399V431M1828.500 399V431M1861.500 399V431M1664 431.500H1868M1664 464.500H1868" stroke="#efefef"/>
<circle cx="1680" cy="415" r="3" fill="#000"/><circle cx="1713" cy="415" r="8" fill="#000"/><circle cx="1746" cy="415" r="1.200" fill="#000"/><ellipse cx="1779" cy="415" rx="2.500" ry="1.500" fill="#000"/><path d="M1812 412V418" stroke="#bbb"/><circle cx="1845" cy="415" r="6.500" fill="#000"/>
<rect x="1669" y="447" width="167" height="2" fill="#000"/>
<text x="1840" y="452" textLength="23" lengthAdjust="spacingAndGlyphs" style="fill:#000">Basic</text>
<path d="M1670 478 1690 479 1710 478 1730 480 1770 479 1810 477 1830 478 1850 479 1863 480 1850 481 1830 480 1810 482 1760 483 1700 483 1672 481Z" fill="#1a1a1a"/>
<use href="#lib" x="1669" y="495"/>
<path d="M1694 489H1698L1700 491H1704V494H1694Z" fill="#4b4b4b"/><circle cx="1705" cy="496" r="6" fill="#4b4b4b"/><circle cx="1705" cy="496" r="3" fill="none" stroke="#f0f0f0"/>
<path d="M1771 489 1783 501M1783 489 1771 501" stroke="#c0c0c0" stroke-width="2"/>
<g opacity=".35"><use href="#lst" x="1797" y="495"/><use href="#tr" x="1849" y="495"/></g>
<use href="#nw" x="1824" y="495"/>
<rect x="1658" y="504" width="231" height="2" fill="#d0d0d0"/>
<path d="M1763 507h19M1763 509h19M1763 511h19" stroke="#bbb" stroke-dasharray="1 1" fill="none"/>

<!-- TRANSPARENCY -->
<rect x="1659.500" y="513.500" width="232" height="153" rx="2" fill="#f0f0f0" stroke="#949494"/>
<rect x="1660" y="514" width="231" height="13" fill="#dadada"/>
<use href="#hb" x="1864" y="521"/>
<rect x="1660" y="527" width="231" height="26" class="t"/><rect x="1660" y="527" width="86" height="26" class="b"/>
<rect x="1819" y="527" width="1" height="26" fill="#c8c8c8"/>
<use href="#ud" x="1668" y="541"/>
<text x="1675" y="544" textLength="61" lengthAdjust="spacingAndGlyphs" style="font-weight:bold;font-size:10.500px">Transparency</text>
<text x="1755" y="544" textLength="54" lengthAdjust="spacingAndGlyphs" style="font-weight:bold;font-size:10.500px;fill:#666">Appearance</text>
<use href="#mn" x="1874" y="540.500"/>
<rect x="1665.500" y="560.500" width="92" height="20" rx="2" class="f"/><text x="1672" y="575" textLength="31" lengthAdjust="spacingAndGlyphs">Normal</text><use href="#ch" x="1748" y="570"/>
<text x="1763" y="575" textLength="36" lengthAdjust="spacingAndGlyphs">Opacity:</text>
<rect x="1803.500" y="560.500" width="69" height="20" rx="2" class="f"/><path d="M1854.500 561V580" stroke="#e2e2e2"/><text x="1807" y="574" textLength="25" lengthAdjust="spacingAndGlyphs">100%</text><path d="M1860.500 567 1863.500 570.500 1860.500 574" fill="none" stroke="#4a4a4a" stroke-width="1.300"/>
<path class="ln" d="M1665 587H1885M1665 659H1885"/>
<rect x="1665.500" y="596.500" width="135" height="54" rx="2" fill="#f0f0f0" stroke="#dcdcdc"/>
<rect x="1804" y="593" width="78" height="20" fill="#e6e6e6"/><text x="1818" y="607" textLength="49" lengthAdjust="spacingAndGlyphs" style="fill:#b4b4b4">Make Mask</text>
<rect x="1806.500" y="619.500" width="11" height="11" rx="1" fill="none" stroke="#c8c8c8"/><text x="1822" y="629" textLength="16" lengthAdjust="spacingAndGlyphs" style="fill:#b8b8b8">Clip</text>
<rect x="1806.500" y="639.500" width="11" height="11" rx="1" fill="none" stroke="#c8c8c8"/><text x="1822" y="649" textLength="52" lengthAdjust="spacingAndGlyphs" style="fill:#b8b8b8">Invert Mask</text>

<!-- PATHFINDER -->
<rect x="1658.500" y="666.500" width="232" height="150" rx="2" fill="#f0f0f0" stroke="#949494"/>
<rect x="1659" y="667" width="231" height="12" fill="#dadada"/>
<use href="#hb" x="1863" y="673"/>
<rect x="1659" y="679" width="231" height="27" class="t"/><rect x="1770" y="679" width="68" height="27" class="b"/>
<rect x="1725" y="679" width="1" height="27" fill="#c8c8c8"/>
<text x="1668" y="696" textLength="48" lengthAdjust="spacingAndGlyphs" style="font-weight:bold;font-size:10.500px;fill:#666">Transform</text>
<text x="1735" y="696" textLength="25" lengthAdjust="spacingAndGlyphs" style="font-weight:bold;font-size:10.500px;fill:#666">Align</text>
<text x="1779" y="696" textLength="49" lengthAdjust="spacingAndGlyphs" style="font-weight:bold;font-size:10.500px">Pathfinder</text>
<use href="#mn" x="1873" y="692.500"/>
<text x="1664" y="724" textLength="62" lengthAdjust="spacingAndGlyphs">Shape Modes:</text>
<text x="1664" y="776" textLength="52" lengthAdjust="spacingAndGlyphs">Pathfinders:</text>
<path class="ic" d="M1670 739H1680V743H1684V753H1674V749H1670Z"/>
<path class="ic" d="M1707 739H1717V743H1711V749H1707Z"/><rect x="1711.500" y="743.500" width="9" height="9" fill="#f0f0f0" stroke="#4b4b4b"/>
<rect x="1744.500" y="739.500" width="10" height="10" fill="none" stroke="#4b4b4b"/><rect x="1748.500" y="743.500" width="9.500" height="9.500" fill="none" stroke="#4b4b4b"/><rect x="1749" y="744" width="5" height="5" fill="#4b4b4b"/>
<path class="ic" d="M1781 739H1791V743H1785V749H1781ZM1791 749V743H1795V753H1785V749Z"/>
<rect x="1813" y="736" width="71" height="19" fill="#e6e6e6"/><text x="1832" y="750" textLength="33" lengthAdjust="spacingAndGlyphs" style="fill:#b4b4b4">Expand</text>
<path d="M1673 791h10v10h-10z" fill="#4b4b4b"/><rect x="1676.500" y="794.500" width="10" height="10" fill="none" stroke="#4b4b4b" stroke-width="1.500"/><rect x="1675.500" y="793.500" width="6" height="6" fill="#f0f0f0"/>
<path class="ic" d="M1710 791H1720V795H1714V801H1710Z"/><rect x="1714" y="795" width="10" height="10" fill="#4b4b4b" stroke="#f0f0f0" stroke-width=".7"/>
<path class="ic" d="M1747 791H1757V795H1761V805H1751V801H1747Z"/>
<rect x="1784.500" y="791.500" width="10" height="10" fill="none" stroke="#aaa"/><rect x="1788.500" y="795.500" width="9.500" height="9.500" fill="none" stroke="#4b4b4b"/><rect x="1788" y="795" width="7" height="6.500" fill="#4b4b4b"/>
<rect x="1822.500" y="791.500" width="10" height="10" fill="none" stroke="#4b4b4b"/><rect x="1826.500" y="795.500" width="10" height="10" fill="none" stroke="#4b4b4b"/><path d="M1826.500 801.500 1832.500 795.500" stroke="#888"/>
<rect x="1860.500" y="791.500" width="10" height="10" fill="#f0f0f0" stroke="#4b4b4b"/><path class="ic" d="M1871 795H1874V805H1864V802H1871Z"/>

<!-- LAYERS -->
<rect x="1658.500" y="817.500" width="241" height="204" rx="2" fill="#f0f0f0" stroke="#949494"/>
<rect x="1659" y="818" width="240" height="13" fill="#dadada"/>
<use href="#hb" x="1873" y="825"/>
<rect x="1659" y="831" width="240" height="27" class="t"/><rect x="1659" y="831" width="48" height="27" class="b"/>
<text x="1668" y="848" textLength="29" lengthAdjust="spacingAndGlyphs" style="font-size:10.500px;font-weight:bold">Layers</text>
<use href="#mn" x="1883" y="845"/>
<rect x="1664.500" y="864.500" width="229" height="129" rx="2" fill="#f0f0f0" stroke="#dcdcdc"/>
<rect x="1665" y="865" width="228" height="21" fill="#b6cfeb"/>
<path d="M1686 865V886M1707 865V886M1713 865V886M1857 865V886" stroke="#d6e4f2"/>
<rect x="1708" y="866" width="3.500" height="19" fill="#4a78ff"/>
<path d="M1668 874Q1674 868 1680 874 1674 880 1668 874Z" fill="#4b4b4b"/><circle cx="1674" cy="874" r="1.500" fill="#b6cfeb"/>
<path d="M1719.500 871 1722.500 874.500 1719.500 878" fill="none" stroke="#444" stroke-width="1.300"/>
<rect x="1737.500" y="866.500" width="17" height="17" fill="#fff" stroke="#000"/><path d="M1739 871h3v3h-3z" fill="#222"/><path d="M1743 872H1753M1739 877H1753" stroke="#555"/>
<text x="1760" y="879" textLength="32" lengthAdjust="spacingAndGlyphs" style="fill:#111">Layer 1</text>
<circle cx="1868" cy="875" r="3.800" fill="none" stroke="#333"/>
<path d="M1887 866H1893V872Z" fill="#333"/>
<text x="1664" y="1006" textLength="33" lengthAdjust="spacingAndGlyphs">1 Layer</text>
<path d="M1735 999H1731V1007H1741V1002M1735 1003 1742 996M1738 996H1742V1000" fill="none" stroke="#4b4b4b" stroke-width="1.200"/>
<circle cx="1764" cy="1000" r="4.500" fill="none" stroke="#c4c4c4" stroke-width="1.200"/><path d="M1760 1004 1756 1008" stroke="#c4c4c4" stroke-width="1.600"/>
<rect x="1782" y="997" width="7" height="7" fill="#4b4b4b"/><rect x="1785.500" y="1000.500" width="7" height="7" fill="none" stroke="#4b4b4b"/>
<path d="M1806 998V1003H1810M1808 1001 1810 1003 1808 1005" stroke="#4b4b4b" fill="none"/><path class="ic" d="M1810 997H1820V1007H1815V1003H1810Z"/>
<use href="#nw" x="1835" y="1002"/><g opacity=".4"><use href="#tr" x="1860" y="1002"/></g>
<rect x="1659" y="1012" width="240" height="2" fill="#d0d0d0"/>
<path d="M1769 1015h19M1769 1017h19M1769 1019h19" stroke="#bbb" stroke-dasharray="1 1" fill="none"/>
</svg>
</body></html>
